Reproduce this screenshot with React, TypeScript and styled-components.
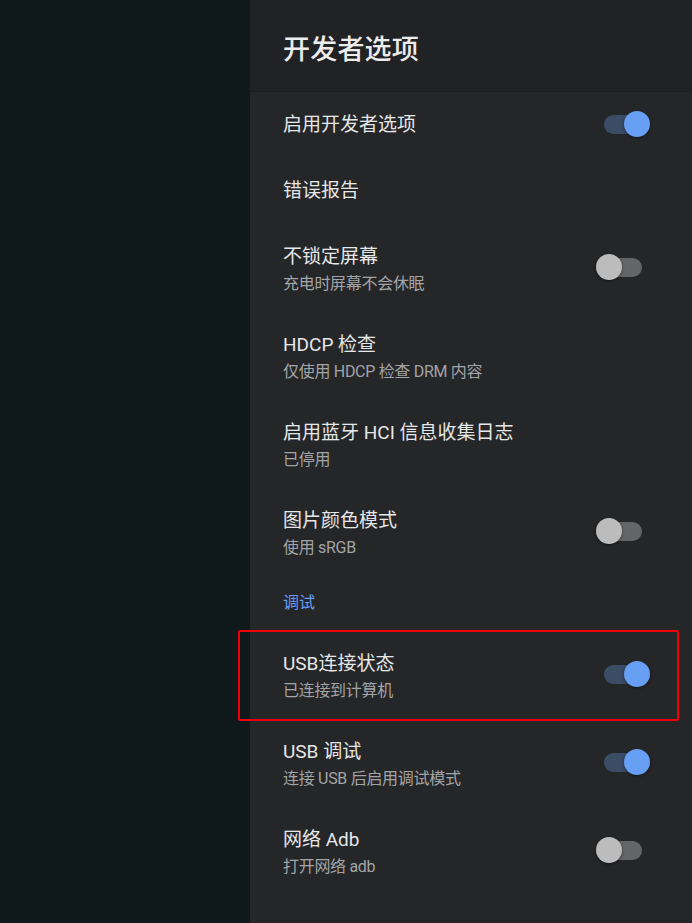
import React from 'react'
import styled, { createGlobalStyle } from 'styled-components'

const GlobalStyle = createGlobalStyle`
  html, body {
    margin: 0;
    padding: 0;
    background: #0f191b;
    overflow: hidden;
  }
  * {
    box-sizing: border-box;
  }
`

const Screen = styled.div`
  display: flex;
  width: 692px;
  height: 923px;
  overflow: hidden;
  font-family: Roboto, 'Noto Sans CJK SC', sans-serif;
`

const Backdrop = styled.div`
  width: 250px;
  flex-shrink: 0;
  background: #0f191b;
`

const Panel = styled.div`
  flex: 1;
  display: flex;
  flex-direction: column;
  background: #252628;
`

const Header = styled.div`
  height: 92px;
  flex-shrink: 0;
  display: flex;
  align-items: center;
  padding: 3px 0 0 33px;
  background: #212224;
  border-bottom: 1px solid #1d1e20;
`

const HeaderTitle = styled.h1`
  margin: 0;
  font-size: 27px;
  font-weight: 500;
  color: #ececec;
  letter-spacing: 0.2px;
`

const List = styled.div`
  display: flex;
  flex-direction: column;
`

const Row = styled.div<{ tall?: boolean; highlighted?: boolean }>`
  position: relative;
  height: ${({ tall }) => (tall ? '88px' : '66px')};
  display: flex;
  align-items: center;
  justify-content: space-between;
  padding: 0 42px 0 33px;
  flex-shrink: 0;

  &::after {
    content: '';
    display: ${({ highlighted }) => (highlighted ? 'block' : 'none')};
    position: absolute;
    left: -12px;
    right: 13px;
    top: -1px;
    bottom: -2px;
    border: 2px solid #f00000;
    border-radius: 2px;
    pointer-events: none;
  }
`

const Texts = styled.div<{ tall?: boolean }>`
  display: flex;
  flex-direction: column;
  padding-top: ${({ tall }) => (tall ? '4px' : '0')};
`

const Title = styled.div`
  font-size: 19px;
  line-height: 28px;
  color: #e6e7e9;
`

const Summary = styled.div`
  font-size: 16px;
  line-height: 26px;
  color: #a2a4a7;
  letter-spacing: -0.3px;
`

const Category = styled.div`
  height: 55px;
  display: flex;
  align-items: center;
  padding: 0 0 6px 33px;
  font-size: 16px;
  color: #669df6;
  flex-shrink: 0;
`

const SwitchBox = styled.div`
  position: relative;
  width: 54px;
  height: 26px;
  flex-shrink: 0;
  margin-bottom: 3px;
`

const Track = styled.div<{ on: boolean }>`
  position: absolute;
  left: 8px;
  top: 4px;
  width: 38px;
  height: 19px;
  border-radius: 10px;
  background: ${({ on }) => (on ? '#3b4c66' : '#646567')};
`

const Thumb = styled.div<{ on: boolean }>`
  position: absolute;
  top: 0;
  left: ${({ on }) => (on ? '28px' : '0')};
  width: 26px;
  height: 26px;
  border-radius: 50%;
  background: ${({ on }) => (on ? '#669ff4' : '#bcbcbc')};
  box-shadow: 0 1px 3px rgba(0, 0, 0, 0.45);
`

function Switch({ on }: { on: boolean }) {
  return (
    <SwitchBox>
      <Track on={on} />
      <Thumb on={on} />
    </SwitchBox>
  )
}

type Item =
  | { kind: 'category'; label: string }
  | { kind: 'pref'; title: string; summary?: string; toggle?: boolean; highlighted?: boolean }

const items: Item[] = [
  { kind: 'pref', title: '启用开发者选项', toggle: true },
  { kind: 'pref', title: '错误报告' },
  { kind: 'pref', title: '不锁定屏幕', summary: '充电时屏幕不会休眠', toggle: false },
  { kind: 'pref', title: 'HDCP 检查', summary: '仅使用 HDCP 检查 DRM 内容' },
  { kind: 'pref', title: '启用蓝牙 HCI 信息收集日志', summary: '已停用' },
  { kind: 'pref', title: '图片颜色模式', summary: '使用 sRGB', toggle: false },
  { kind: 'category', label: '调试' },
  { kind: 'pref', title: 'USB连接状态', summary: '已连接到计算机', toggle: true, highlighted: true },
  { kind: 'pref', title: 'USB 调试', summary: '连接 USB 后启用调试模式', toggle: true },
  { kind: 'pref', title: '网络 Adb', summary: '打开网络 adb', toggle: false },
  { kind: 'pref', title: 'Android日志收集器', summary: '' },
]

export default function App() {
  return (
    <Screen>
      <GlobalStyle />
      <Backdrop />
      <Panel>
        <Header>
          <HeaderTitle>开发者选项</HeaderTitle>
        </Header>
        <List>
          {items.map((item, i) => {
            if (item.kind === 'category') return <Category key={i}>{item.label}</Category>
            const tall = item.summary !== undefined
            return (
              <Row key={i} tall={tall} highlighted={item.highlighted}>
                <Texts tall={tall}>
                  <Title>{item.title}</Title>
                  {item.summary ? <Summary>{item.summary}</Summary> : null}
                </Texts>
                {item.toggle !== undefined ? <Switch on={item.toggle} /> : null}
              </Row>
            )
          })}
        </List>
      </Panel>
    </Screen>
  )
}
